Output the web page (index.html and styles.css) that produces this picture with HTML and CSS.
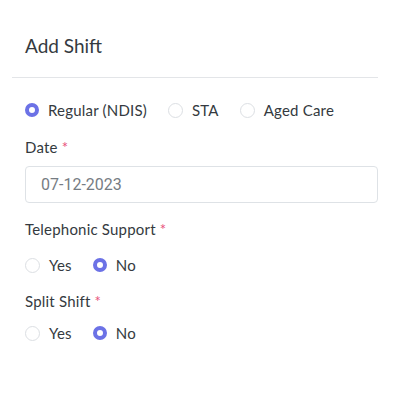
FILE: index.html
```html
<!DOCTYPE html>
<html lang="en">
<head>
    <meta charset="UTF-8">
    <meta name="viewport" content="width=device-width, initial-scale=1.0">
    <title>Add Shift</title>
    <link rel="stylesheet" href="styles.css">
</head>
<body>
    <div class="modal">
        <div class="modal-header">
            <h5 class="modal-title">Add Shift</h5>
        </div>
        <div class="modal-body">
            <div class="radios tipo">
                <label class="opcion"><span class="radio checked"></span>Regular (NDIS)</label>
                <label class="opcion"><span class="radio"></span>STA</label>
                <label class="opcion"><span class="radio"></span>Aged Care</label>
            </div>
            <div class="campo">
                <div class="etiqueta fecha">Date <span class="req">*</span></div>
                <div class="input">07-12-2023</div>
            </div>
            <div class="campo">
                <div class="etiqueta">Telephonic Support <span class="req">*</span></div>
                <div class="radios sep">
                    <label class="opcion"><span class="radio"></span>Yes</label>
                    <label class="opcion"><span class="radio checked"></span>No</label>
                </div>
            </div>
            <div class="campo">
                <div class="etiqueta">Split Shift <span class="req">*</span></div>
                <div class="radios">
                    <label class="opcion"><span class="radio"></span>Yes</label>
                    <label class="opcion"><span class="radio checked"></span>No</label>
                </div>
            </div>
        </div>
    </div>
</body>
</html>
```

FILE: styles.css
```css
body {
    margin: 0;
    background: #ffffff;
    font-family: "Lato", "Noto Sans", sans-serif;
    color: #343a40;
}
.modal {
    margin-left: 12px;
    width: 366px;
}
.modal-header {
    padding: 34px 13px 0 13px;
    height: 43px;
    border-bottom: 1px solid #e3e5e8;
}
.modal-title {
    margin: 0;
    font-size: 19px;
    font-weight: 400;
    line-height: 24px;
}
.modal-body {
    padding: 22px 0 0 13px;
}
.radios {
    display: flex;
    align-items: center;
    gap: 21px;
    font-size: 15px;
    line-height: 20px;
    letter-spacing: 0.2px;
}
.radios.tipo {
    margin-bottom: 17px;
}
.radios.sep {
    margin-top: 16px;
}
.opcion {
    display: flex;
    align-items: center;
    gap: 9px;
}
.radio {
    width: 13px;
    height: 13px;
    border: 1px solid #dcdfe3;
    border-radius: 50%;
    background: #fff;
}
.radio.checked {
    width: 6px;
    height: 6px;
    border: 4.5px solid #6c72e6;
    background: #fff;
}
.campo {
    margin-bottom: 16px;
}
.etiqueta {
    font-size: 15px;
    line-height: 20px;
    letter-spacing: 0.2px;
    margin-bottom: 12px;
}
.etiqueta.fecha {
    margin-bottom: 9px;
}
.req {
    color: #e8507a;
}
.input {
    height: 35px;
    border: 1px solid #dee2e6;
    border-radius: 4px;
    padding-left: 15px;
    font-family: "Roboto", sans-serif;
    font-size: 16px;
    line-height: 35px;
    color: #767c83;
}
```
